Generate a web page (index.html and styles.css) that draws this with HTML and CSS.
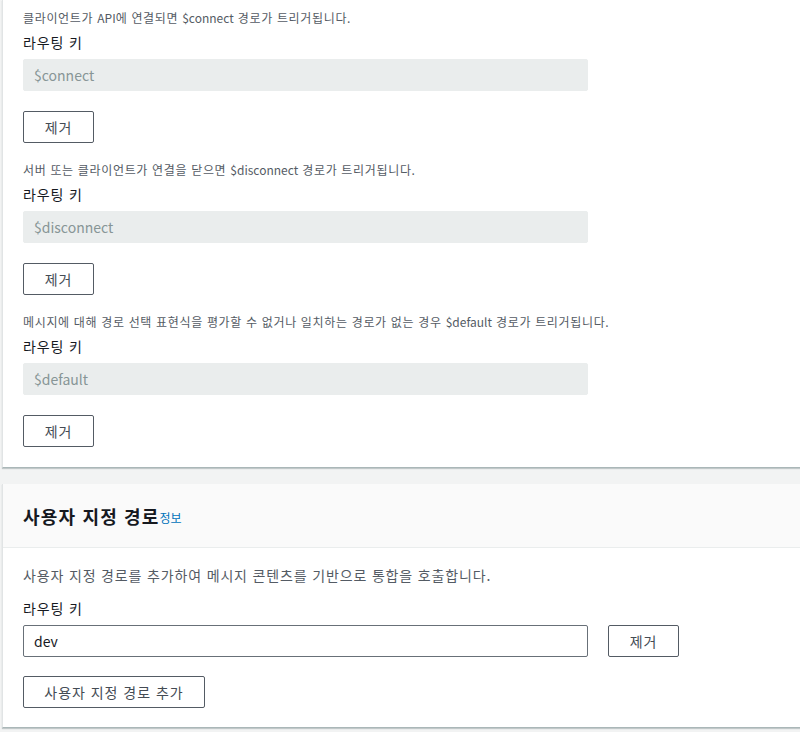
FILE: index.html
```html
<!DOCTYPE html>
<html lang="ko">
<head>
<meta charset="utf-8">
<link rel="stylesheet" href="styles.css">
</head>
<body>
<div class="page">
  <section class="card card-top">
    <div class="card-body">
      <div class="route">
        <p class="desc">클라이언트가 <span class="lat">API</span>에 연결되면 <span class="lat">$connect</span> 경로가 트리거됩니다.</p>
        <label class="label">라우팅 키</label>
        <div class="input input-disabled">$connect</div>
        <button class="btn">제거</button>
      </div>
      <div class="route">
        <p class="desc">서버 또는 클라이언트가 연결을 닫으면 <span class="lat">$disconnect</span> 경로가 트리거됩니다.</p>
        <label class="label">라우팅 키</label>
        <div class="input input-disabled">$disconnect</div>
        <button class="btn">제거</button>
      </div>
      <div class="route">
        <p class="desc">메시지에 대해 경로 선택 표현식을 평가할 수 없거나 일치하는 경로가 없는 경우 <span class="lat">$default</span> 경로가 트리거됩니다.</p>
        <label class="label">라우팅 키</label>
        <div class="input input-disabled">$default</div>
        <button class="btn">제거</button>
      </div>
    </div>
  </section>

  <section class="card card-custom">
    <header class="card-header">
      <h2 class="title">사용자 지정 경로</h2><a class="info">정보</a>
    </header>
    <div class="card-body custom-body">
      <p class="body-desc">사용자 지정 경로를 추가하여 메시지 콘텐츠를 기반으로 통합을 호출합니다.</p>
      <label class="label">라우팅 키</label>
      <div class="row">
        <div class="input input-active">dev</div>
        <button class="btn">제거</button>
      </div>
      <button class="btn btn-wide">사용자 지정 경로 추가</button>
    </div>
  </section>
</div>
</body>
</html>
```

FILE: styles.css
```css
* { box-sizing: border-box; }
html, body { margin: 0; padding: 0; }
body {
  background: #f2f3f3;
  font-family: "Noto Sans CJK KR", "Noto Sans", sans-serif;
  color: #16191f;
  width: 800px;
  height: 732px;
  overflow: hidden;
}
.page {
  padding-left: 2px;
  display: flex;
  flex-direction: column;
  gap: 16px;
}
.card {
  background: #fff;
  border-left: 1px solid #e1e4e5;
  border-bottom: 1px solid #aab7b8;
  box-shadow: 0 1px 1px rgba(0,28,36,0.2);
}
.card-body {
  padding: 0 20px;
}
.card-top .card-body {
  padding-top: 10px;
  padding-bottom: 20px;
}
.route {
  display: flex;
  flex-direction: column;
  align-items: flex-start;
  margin-bottom: 19px;
}
.route:last-child { margin-bottom: 0; }
.desc {
  margin: 0;
  font-size: 12px;
  line-height: 16px;
  color: #545b64;
  letter-spacing: 0.055em;
}
.lat { letter-spacing: 0; }
.label {
  display: block;
  margin-top: 5px;
  font-size: 14px;
  line-height: 22px;
  color: #16191f;
  letter-spacing: 0.06em;
}
.input {
  width: 565px;
  height: 32px;
  padding: 0 10px;
  font-size: 14px;
  line-height: 30px;
  border-radius: 2px;
}
.input-disabled {
  margin-top: 6px;
  background: #eaeded;
  border: 1px solid #eaeded;
  color: #879596;
}
.input-active {
  background: #fff;
  border: 1px solid #687078;
  color: #16191f;
}
.btn {
  margin-top: 20px;
  height: 32px;
  width: 71px;
  padding: 0 10px;
  background: #fff;
  border: 1px solid #545b64;
  border-radius: 2px;
  font-family: inherit;
  font-size: 14px;
  font-weight: 400;
  color: #444b54;
  letter-spacing: 0.07em;
}
.card-header {
  background: #fafafa;
  border-bottom: 1px solid #eaeded;
  height: 64px;
  padding: 0 20px;
  display: flex;
  align-items: center;
}
.title {
  margin: 0;
  font-size: 18px;
  font-weight: 700;
  color: #16191f;
  line-height: 24px;
  letter-spacing: 0.065em;
}
.info {
  font-size: 12px;
  color: #0073bb;
  margin-top: 3px;
}
.custom-body {
  padding-top: 17px;
  padding-bottom: 19px;
}
.body-desc {
  margin: 0;
  font-size: 14px;
  line-height: 20px;
  color: #545b64;
  letter-spacing: 0.06em;
}
.custom-body .label { margin-top: 12px; }
.row {
  margin-top: 6px;
  display: flex;
  align-items: center;
  gap: 20px;
}
.row .btn { margin-top: 0; }
.btn-wide {
  margin-top: 19px;
  width: 182px;
}
```
